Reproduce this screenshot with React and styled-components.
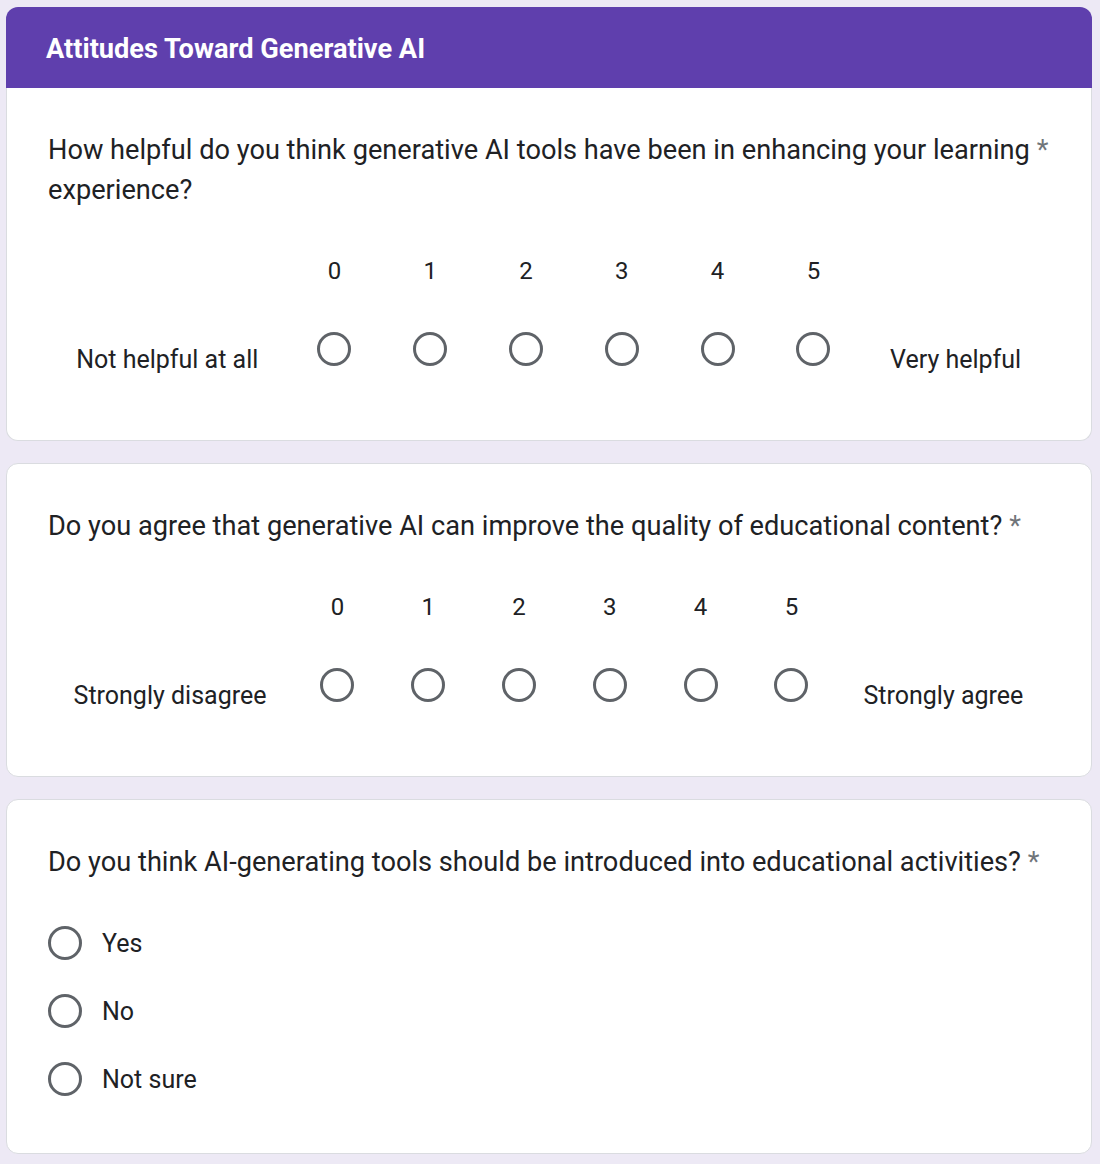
import React from "react";
import styled, { createGlobalStyle } from "styled-components";

const Global = createGlobalStyle`
  html, body { margin: 0; padding: 0; background: #ede9f5; }
  body { font-family: Roboto, "Noto Sans", Arial, sans-serif; color: #202124; }
`;

const Page = styled.div`
  padding: 7px 8px 10px 6px;
  display: flex;
  flex-direction: column;
  gap: 22px;
`;

const Section = styled.div`
  display: flex;
  flex-direction: column;
`;

const Header = styled.div`
  background: #5f3fad;
  border-radius: 12px 12px 0 0;
  padding: 22px 40px 19px 40px;
  color: #fff;
  font-size: 27.2px;
  font-weight: 700;
  line-height: 40px;
`;

const Card = styled.div`
  background: #fff;
  border: 1px solid #dadce0;
  border-top: ${(p) => (p.$attached ? "none" : "1px solid #dadce0")};
  border-radius: ${(p) => (p.$attached ? "0 0 12px 12px" : "12px")};
  padding: 42px 41px ${(p) => p.$pb}px 41px;
`;

const Question = styled.div`
  font-size: 27.2px;
  line-height: 40px;
`;

const Star = styled.span`
  color: #70757a;
  padding-left: 0.25em;
`;

const Scale = styled.div`
  display: grid;
  grid-template-columns: ${(p) => `${p.$left}px repeat(6, ${p.$col}px) 1fr`};
  grid-template-rows: 40px 89px;
  margin-top: 41px;
`;

const Num = styled.div`
  grid-row: 1;
  grid-column: ${(p) => p.$c};
  text-align: center;
  font-size: 24px;
  line-height: 40px;
`;

const EdgeLabel = styled.div`
  grid-row: 2;
  grid-column: ${(p) => p.$c};
  text-align: center;
  font-size: 25px;
  line-height: 40px;
  padding-top: 49px;
  white-space: nowrap;
`;

const RadioCell = styled.div`
  grid-row: 2;
  grid-column: ${(p) => p.$c};
  display: flex;
  justify-content: center;
  padding-top: 41px;
`;

const Radio = styled.span`
  box-sizing: border-box;
  width: 34px;
  height: 34px;
  border-radius: 50%;
  border: 3px solid #5f6368;
  display: inline-block;
  flex: none;
`;

const Options = styled.div`
  margin-top: 27px;
  display: flex;
  flex-direction: column;
`;

const Option = styled.div`
  height: 68px;
  display: flex;
  align-items: center;
  gap: 20px;
  font-size: 25px;
`;

function LinearScale({ left, col, low, high }) {
  const nums = [0, 1, 2, 3, 4, 5];
  return (
    <Scale $left={left} $col={col}>
      {nums.map((n) => (
        <Num key={n} $c={n + 2}>{n}</Num>
      ))}
      <EdgeLabel $c={1}>{low}</EdgeLabel>
      {nums.map((n) => (
        <RadioCell key={n} $c={n + 2}>
          <Radio />
        </RadioCell>
      ))}
      <EdgeLabel $c={8}>{high}</EdgeLabel>
    </Scale>
  );
}

export default function App() {
  return (
    <>
      <Global />
      <Page>
        <Section>
          <Header>Attitudes Toward Generative AI</Header>
          <Card $attached $pb={60}>
            <Question>
              How helpful do you think generative AI tools have been in enhancing your learning
              <Star>*</Star> experience?
            </Question>
            <LinearScale left={238.5} col={95.8} low="Not helpful at all" high="Very helpful" />
          </Card>
        </Section>
        <Card $pb={60}>
          <Question>
            Do you agree that generative AI can improve the quality of educational content?
            <Star>*</Star>
          </Question>
          <LinearScale left={244} col={90.8} low="Strongly disagree" high="Strongly agree" />
        </Card>
        <Card $pb={40}>
          <Question>
            Do you think AI-generating tools should be introduced into educational activities?
            <Star>*</Star>
          </Question>
          <Options>
            {["Yes", "No", "Not sure"].map((o) => (
              <Option key={o}>
                <Radio />
                <span>{o}</span>
              </Option>
            ))}
          </Options>
        </Card>
      </Page>
    </>
  );
}
